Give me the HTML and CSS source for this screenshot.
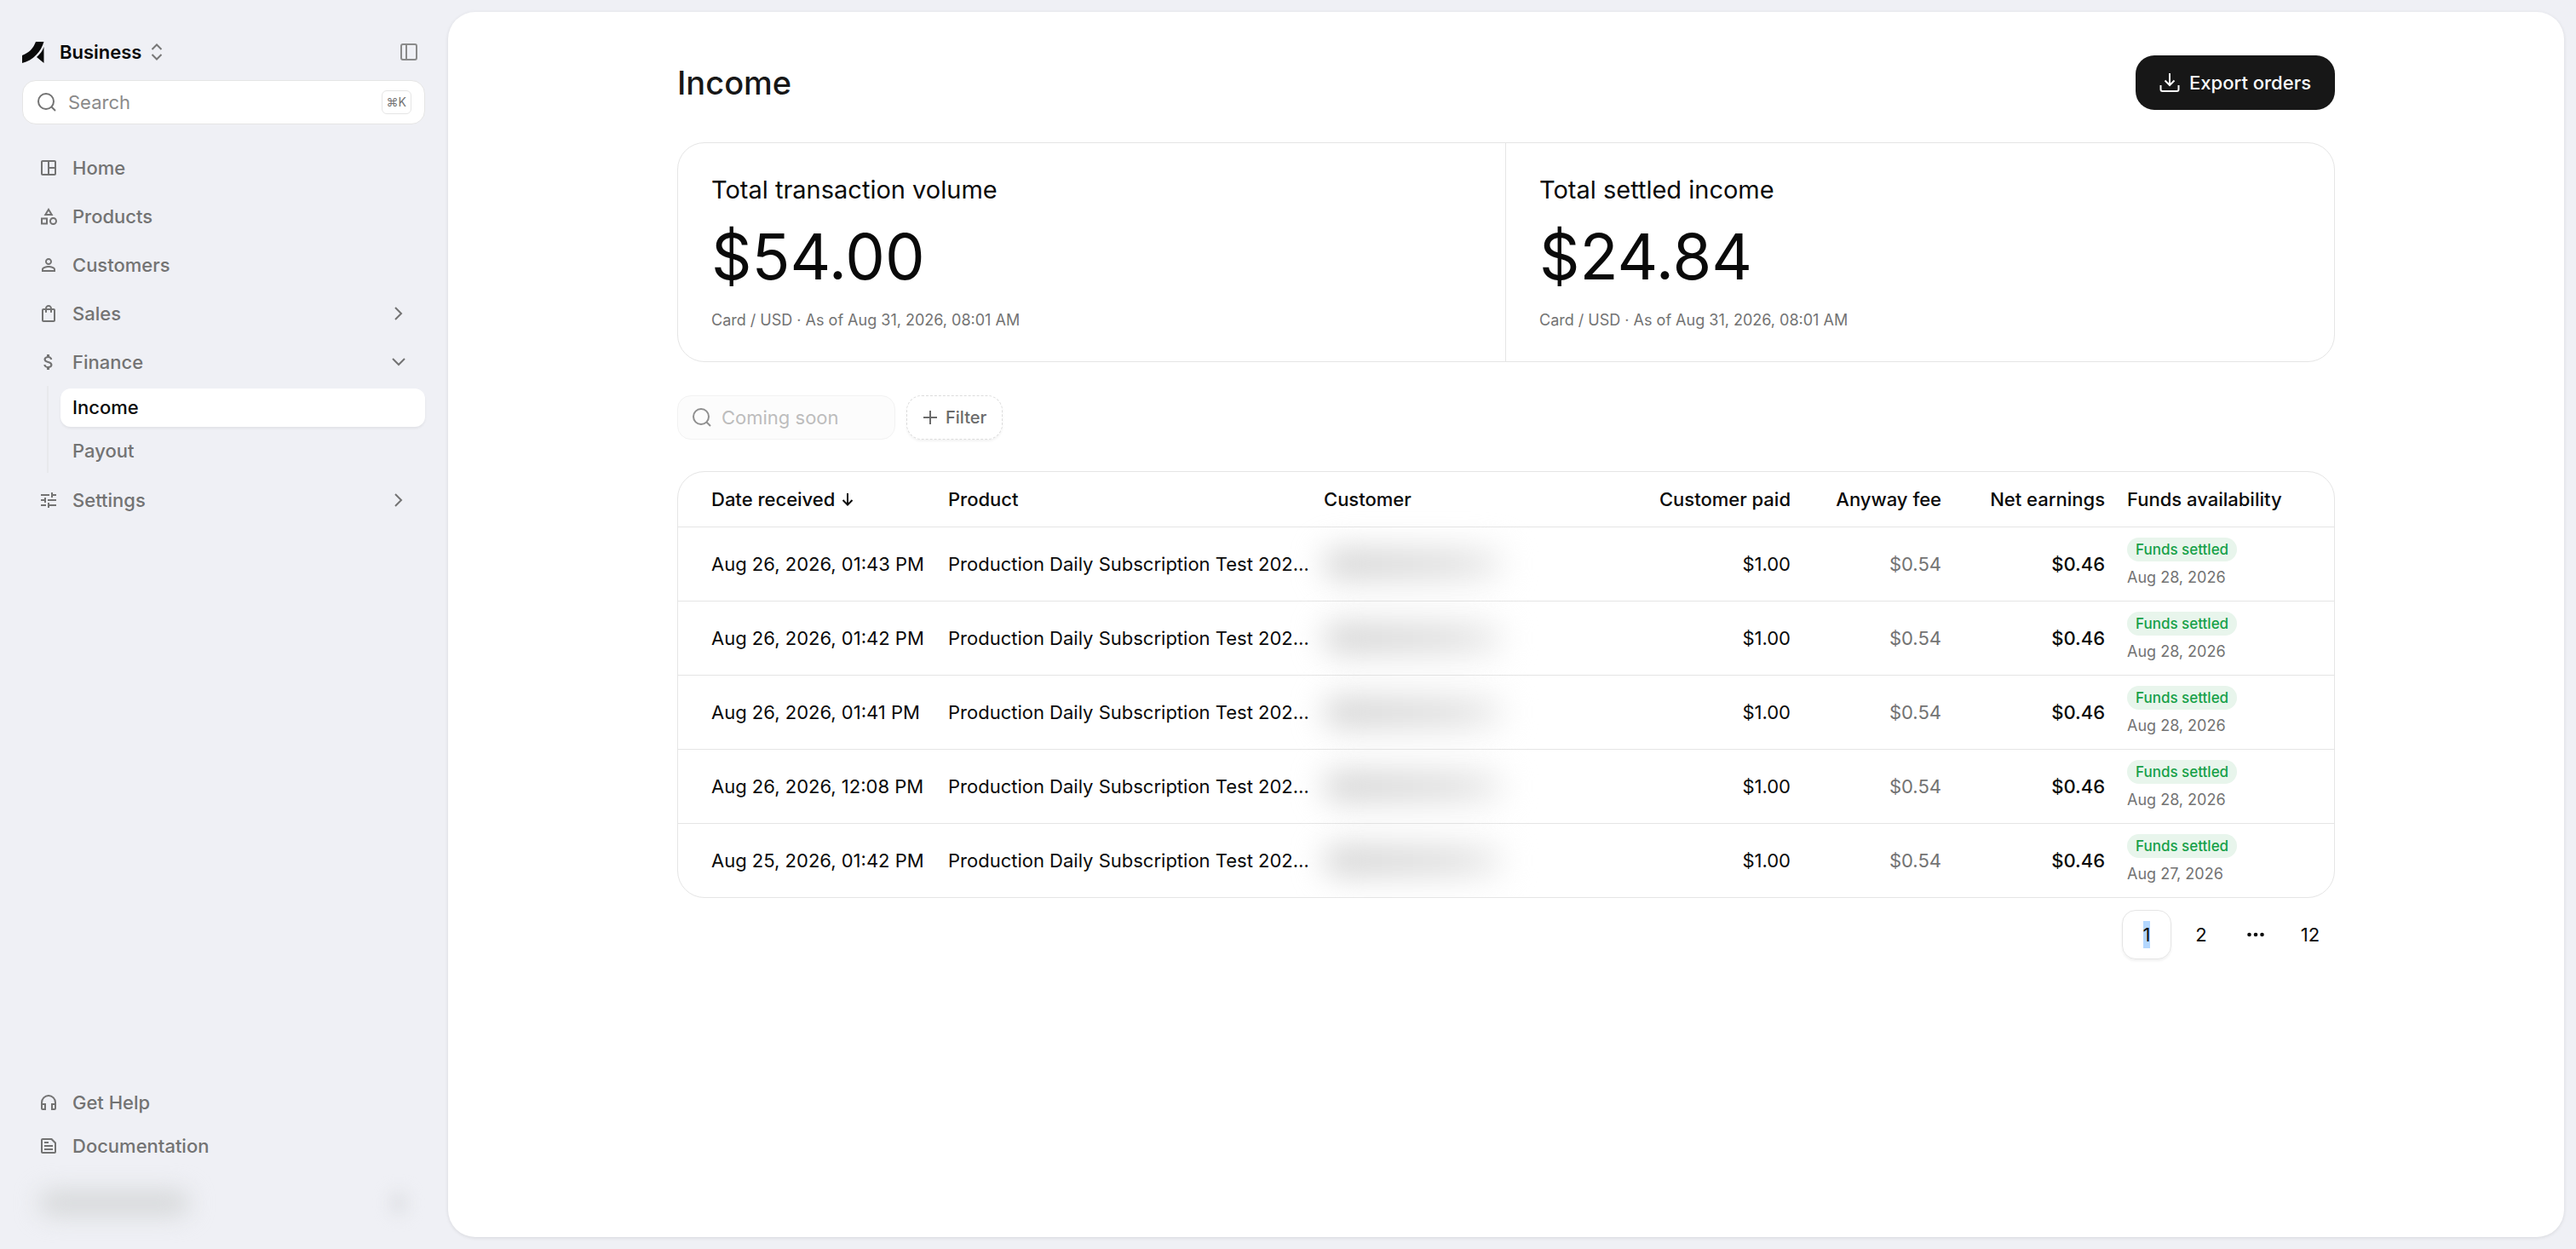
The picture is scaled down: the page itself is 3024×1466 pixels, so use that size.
FILE: index.html
```html
<!DOCTYPE html>
<html lang="en">
<head>
    <meta charset="UTF-8">
    <meta name="viewport" content="width=device-width, initial-scale=1.0">
    <title>Income</title>
    <link rel="stylesheet" href="styles.css">
</head>
<body>
    <aside class="sidebar">
        <div class="brand-row">
            <button class="brand" type="button">
                <svg class="logo" viewBox="0 0 26 26"><path d="M16 1h9.500C22.500 12 13 23 0 26v-9C8 14 13 9 16 1z"/><path d="M25.500 7v19l-8.500-7c4-3.500 7-7.500 8.500-12z"/></svg>
                <span>Business</span>
                <svg class="updown" viewBox="0 0 14 20"><path d="M1.500 7L7 1.500 12.500 7M1.500 13L7 18.500 12.500 13"/></svg>
            </button>
            <button class="toggle" type="button" aria-label="Toggle sidebar">
                <svg viewBox="0 0 20 20"><rect x="1" y="1" width="18" height="18" rx="2"/><path d="M7 1v18"/></svg>
            </button>
        </div>
        <label class="search">
            <svg viewBox="0 0 24 24"><circle cx="11" cy="11" r="9"/><path d="M17.500 17.500L22 22"/></svg>
            <input type="text" placeholder="Search" aria-label="Search">
            <kbd>⌘K</kbd>
        </label>

        <nav class="nav">
            <a href="#" class="nav-item">
                <svg class="icon" viewBox="0 0 24 24"><path d="M19 3H5c-1.100 0-2 .9-2 2v14c0 1.100.9 2 2 2h14c1.100 0 2-.9 2-2V5c0-1.100-.9-2-2-2zM5 19V5h6v14H5zm14 0h-6v-6h6v6zm0-8h-6V5h6v6z"/></svg>
                <span>Home</span>
            </a>
            <a href="#" class="nav-item">
                <svg class="icon" viewBox="0 0 24 24"><path d="M12 2l-5.500 9h11L12 2zm0 3.840L13.930 9h-3.870L12 5.840zM17.500 13c-2.490 0-4.500 2.010-4.500 4.500s2.010 4.500 4.500 4.500 4.500-2.010 4.500-4.500-2.010-4.500-4.500-4.500zm0 7a2.500 2.500 0 0 1 0-5 2.500 2.500 0 0 1 0 5zM3 21.500h8v-8H3v8zm2-6h4v4H5v-4z"/></svg>
                <span>Products</span>
            </a>
            <a href="#" class="nav-item">
                <svg class="icon" viewBox="0 0 24 24"><path d="M12 5.900a2.100 2.100 0 1 1 0 4.200 2.100 2.100 0 0 1 0-4.200m0 9c2.970 0 6.100 1.460 6.100 2.100v1.100H5.900V17c0-.64 3.130-2.100 6.100-2.100M12 4C9.790 4 8 5.790 8 8s1.790 4 4 4 4-1.790 4-4-1.790-4-4-4zm0 9c-2.670 0-8 1.340-8 4v3h16v-3c0-2.660-5.330-4-8-4z"/></svg>
                <span>Customers</span>
            </a>
            <a href="#" class="nav-item">
                <svg class="icon" viewBox="0 0 24 24"><path d="M18 6h-2c0-2.210-1.790-4-4-4S8 3.790 8 6H6c-1.100 0-2 .9-2 2v12c0 1.100.9 2 2 2h12c1.100 0 2-.9 2-2V8c0-1.100-.9-2-2-2zm-6-2c1.100 0 2 .9 2 2h-4c0-1.100.9-2 2-2zm6 16H6V8h2v2c0 .55.45 1 1 1s1-.45 1-1V8h4v2c0 .55.45 1 1 1s1-.45 1-1V8h2v12z"/></svg>
                <span>Sales</span>
                <svg class="chevron" viewBox="0 0 20 20"><path d="M6 3l7 7-7 7"/></svg>
            </a>
            <a href="#" class="nav-item">
                <svg class="icon" viewBox="0 0 24 24"><path d="M11.800 10.900c-2.270-.59-3-1.200-3-2.150 0-1.090 1.010-1.850 2.700-1.850 1.780 0 2.440.85 2.500 2.100h2.210c-.07-1.720-1.120-3.300-3.210-3.810V3h-3v2.160c-1.940.42-3.500 1.680-3.500 3.610 0 2.310 1.910 3.460 4.700 4.130 2.500.6 3 1.480 3 2.410 0 .69-.49 1.790-2.700 1.790-2.060 0-2.870-.92-2.980-2.100h-2.200c.12 2.190 1.760 3.420 3.680 3.830V21h3v-2.150c1.950-.37 3.500-1.500 3.500-3.550 0-2.840-2.430-3.810-4.700-4.400z"/></svg>
                <span>Finance</span>
                <svg class="chevron" viewBox="0 0 20 20"><path d="M3 6l7 7 7-7"/></svg>
            </a>
            <div class="subnav">
                <a href="#" class="sub-item active">Income</a>
                <a href="#" class="sub-item">Payout</a>
            </div>
            <a href="#" class="nav-item">
                <svg class="icon" viewBox="0 0 24 24"><path d="M3 17v2h6v-2H3zM3 5v2h10V5H3zm10 16v-2h8v-2h-8v-2h-2v6h2zM7 9v2H3v2h4v2h2V9H7zm14 4v-2H11v2h10zm-6-4h2V7h4V5h-4V3h-2v6z"/></svg>
                <span>Settings</span>
                <svg class="chevron" viewBox="0 0 20 20"><path d="M6 3l7 7-7 7"/></svg>
            </a>
        </nav>

        <nav class="nav-bottom">
            <a href="#" class="nav-item">
                <svg class="icon" viewBox="0 0 24 24"><path d="M12 3a9 9 0 0 0-9 9v7c0 1.100.9 2 2 2h4v-8H5v-1a7 7 0 0 1 14 0v1h-4v8h4a2 2 0 0 0 2-2v-7a9 9 0 0 0-9-9zM7 15v4H5v-4h2zm12 4h-2v-4h2v4z"/></svg>
                <span>Get Help</span>
            </a>
            <a href="#" class="nav-item">
                <svg class="icon" viewBox="0 0 24 24"><path d="M16 3H5c-1.100 0-2 .9-2 2v14c0 1.100.9 2 2 2h14c1.100 0 2-.9 2-2V8l-5-5zm3 16H5V5h10l4 4v10zM7 17h10v-2H7v2zm5-10H7v2h5V7zm-5 6h10v-2H7v2z"/></svg>
                <span>Documentation</span>
            </a>
        </nav>
        <div class="account">
            <span class="account-name"></span>
            <span class="account-more"></span>
        </div>
    </aside>

    <main class="panel">
        <div class="content">
            <header class="page-head">
                <h1>Income</h1>
                <button class="export" type="button">
                    <svg viewBox="0 0 24 24"><path d="M12 1v14M6.500 9.500L12 15l5.500-5.500M1.500 15v5a2 2 0 0 0 2 2h17a2 2 0 0 0 2-2v-5"/></svg>
                    Export orders
                </button>
            </header>

            <section class="stats">
                <div class="stat">
                    <h2>Total transaction volume</h2>
                    <p class="amount">$54.00</p>
                    <p class="note">Card / USD · As of Aug 31, 2026, 08:01 AM</p>
                </div>
                <div class="stat">
                    <h2>Total settled income</h2>
                    <p class="amount">$24.84</p>
                    <p class="note">Card / USD · As of Aug 31, 2026, 08:01 AM</p>
                </div>
            </section>

            <div class="filters">
                <label class="search table-search">
                    <svg viewBox="0 0 24 24"><circle cx="11" cy="11" r="9"/><path d="M17.500 17.500L22 22"/></svg>
                    <input type="text" placeholder="Coming soon" aria-label="Search orders" disabled>
                </label>
                <button class="filter" type="button">
                    <svg viewBox="0 0 18 18"><path d="M9 1v16M1 9h16"/></svg>
                    Filter
                </button>
            </div>

            <div class="table-card">
                <table>
                    <thead>
                        <tr>
                            <th class="col-date">Date received <svg class="sort" viewBox="0 0 14 16"><path d="M7 1v13M1.500 9L7 14.500 12.500 9"/></svg></th>
                            <th class="col-product">Product</th>
                            <th>Customer</th>
                            <th class="col-paid num">Customer paid</th>
                            <th class="col-fee num">Anyway fee</th>
                            <th class="col-net num">Net earnings</th>
                            <th class="col-funds">Funds availability</th>
                        </tr>
                    </thead>
                    <tbody>
                        <tr>
                            <td>Aug 26, 2026, 01:43 PM</td>
                            <td>Production Daily Subscription Test 202…</td>
                            <td><span class="hidden-name"></span></td>
                            <td class="num">$1.00</td>
                            <td class="num fee">$0.54</td>
                            <td class="num net">$0.46</td>
                            <td><span class="badge">Funds settled</span><span class="settled">Aug 28, 2026</span></td>
                        </tr>
                        <tr>
                            <td>Aug 26, 2026, 01:42 PM</td>
                            <td>Production Daily Subscription Test 202…</td>
                            <td><span class="hidden-name"></span></td>
                            <td class="num">$1.00</td>
                            <td class="num fee">$0.54</td>
                            <td class="num net">$0.46</td>
                            <td><span class="badge">Funds settled</span><span class="settled">Aug 28, 2026</span></td>
                        </tr>
                        <tr>
                            <td>Aug 26, 2026, 01:41 PM</td>
                            <td>Production Daily Subscription Test 202…</td>
                            <td><span class="hidden-name"></span></td>
                            <td class="num">$1.00</td>
                            <td class="num fee">$0.54</td>
                            <td class="num net">$0.46</td>
                            <td><span class="badge">Funds settled</span><span class="settled">Aug 28, 2026</span></td>
                        </tr>
                        <tr>
                            <td>Aug 26, 2026, 12:08 PM</td>
                            <td>Production Daily Subscription Test 202…</td>
                            <td><span class="hidden-name"></span></td>
                            <td class="num">$1.00</td>
                            <td class="num fee">$0.54</td>
                            <td class="num net">$0.46</td>
                            <td><span class="badge">Funds settled</span><span class="settled">Aug 28, 2026</span></td>
                        </tr>
                        <tr>
                            <td>Aug 25, 2026, 01:42 PM</td>
                            <td>Production Daily Subscription Test 202…</td>
                            <td><span class="hidden-name"></span></td>
                            <td class="num">$1.00</td>
                            <td class="num fee">$0.54</td>
                            <td class="num net">$0.46</td>
                            <td><span class="badge">Funds settled</span><span class="settled">Aug 27, 2026</span></td>
                        </tr>
                    </tbody>
                </table>
            </div>

            <nav class="pagination">
                <a href="#" class="page current"><span class="selected">1</span></a>
                <a href="#" class="page">2</a>
                <span class="page"><svg viewBox="0 0 20 6"><circle cx="2.500" cy="3" r="2.300"/><circle cx="10" cy="3" r="2.300"/><circle cx="17.500" cy="3" r="2.300"/></svg></span>
                <a href="#" class="page">12</a>
            </nav>
        </div>
    </main>
</body>
</html>
```
FILE: styles.css
```css
* {
    box-sizing: border-box;
}

body {
    margin: 0;
    min-height: 100vh;
    display: flex;
    background-color: #eff0f5;
    color: #0a0a0a;
    font-family: Inter, sans-serif;
    font-size: 22px;
    line-height: 32px;
}

a {
    color: inherit;
    text-decoration: none;
}

button,
input {
    font: inherit;
    color: inherit;
}

button {
    border: none;
    background: none;
    padding: 0;
    cursor: pointer;
}

svg {
    flex: none;
    fill: none;
    stroke: currentColor;
    stroke-width: 2;
}

/* sidebar */
.sidebar {
    flex: none;
    width: 526px;
    padding: 40px 27px 16px 26px;
    display: flex;
    flex-direction: column;
}

.brand-row {
    display: flex;
    align-items: center;
    justify-content: space-between;
    height: 42px;
    margin-bottom: 12px;
    padding-right: 9px;
}

.brand {
    display: flex;
    align-items: center;
    font-weight: 600;
}

.logo {
    width: 26px;
    height: 26px;
    margin-right: 18px;
    fill: currentColor;
    stroke: none;
}

.updown {
    width: 14px;
    height: 20px;
    margin-left: 11px;
    color: #777;
}

.toggle {
    display: flex;
    color: #8a8a8a;
}

.toggle svg {
    width: 20px;
    height: 20px;
}

.search {
    display: flex;
    align-items: center;
    gap: 13px;
    height: 52px;
    padding: 0 15px 0 16px;
    border: 1px solid #e5e5e5;
    border-radius: 16px;
    background-color: #fff;
    color: #737373;
}

.search svg {
    width: 24px;
    height: 24px;
}

.search input {
    flex: 1;
    min-width: 0;
    padding: 0;
    border: none;
    outline: none;
    background: none;
}

.search input::placeholder {
    color: #8a8a8a;
    opacity: 1;
}

kbd {
    height: 28px;
    padding: 0 5px;
    border: 1px solid #e5e5e5;
    border-radius: 6px;
    font-family: inherit;
    font-size: 14px;
    line-height: 26px;
}

.nav {
    margin-top: 25px;
    display: flex;
    flex-direction: column;
    gap: 6px;
}

.nav-item {
    display: flex;
    align-items: center;
    gap: 16px;
    height: 51px;
    padding: 0 21px 0 19px;
    color: #737373;
    font-weight: 500;
}

.icon {
    width: 24px;
    height: 24px;
    fill: currentColor;
    stroke: none;
}

.chevron {
    width: 20px;
    height: 20px;
    margin-left: auto;
}

.subnav {
    display: flex;
    flex-direction: column;
    gap: 6px;
    margin: -3px 0 0 29px;
    padding: 3px 0 3px 14px;
    border-left: 2px solid #e8e9ec;
}

.sub-item {
    padding: 6px 14px 7px;
    border-radius: 12px;
    color: #737373;
    font-weight: 500;
}

.sub-item.active {
    background-color: #fff;
    color: #0a0a0a;
    box-shadow: 0 2px 3px rgba(0, 0, 0, 0.06);
}

.nav-bottom {
    margin-top: auto;
}

.account {
    display: flex;
    align-items: center;
    justify-content: space-between;
    height: 80px;
    padding: 4px 24px 0 20px;
}

.account-name {
    width: 176px;
    height: 28px;
    border-radius: 14px;
    background-color: #d5d7d8;
    filter: blur(14px);
}

.account-more {
    width: 14px;
    height: 24px;
    border-radius: 7px;
    background-color: #d8d9dd;
    filter: blur(10px);
}

/* main panel */
.panel {
    flex: 1;
    min-width: 0;
    margin: 14px 14px 14px 0;
    padding: 51px 40px;
    border-radius: 32px;
    background-color: #fff;
    box-shadow: 0 1px 4px rgba(0, 0, 0, 0.1);
}

.content {
    max-width: 1946px;
    margin: 0 auto;
}

.page-head {
    display: flex;
    align-items: center;
    justify-content: space-between;
    margin-bottom: 38px;
}

h1 {
    margin: 0;
    color: #171717;
    font-size: 38px;
    font-weight: 500;
    line-height: 48px;
}

.export {
    display: flex;
    align-items: center;
    gap: 11px;
    height: 64px;
    padding: 0 28px;
    border-radius: 22px;
    background-color: #171717;
    color: #fafafa;
    font-weight: 500;
}

.export svg {
    width: 24px;
    height: 24px;
}

.stats {
    display: grid;
    grid-template-columns: 1fr 1fr;
    border: 1px solid #e5e5e5;
    border-radius: 32px;
}

.stat {
    padding: 37px 39px 32px;
}

.stat:first-child {
    border-right: 1px solid #e5e5e5;
}

.stat h2 {
    margin: 0;
    font-size: 29px;
    font-weight: 400;
    line-height: 36px;
}

.amount {
    margin: 18px 0 17px;
    font-size: 74px;
    line-height: 84px;
}

.note {
    margin: 0;
    color: #737373;
    font-size: 18px;
}

.filters {
    display: flex;
    gap: 13px;
    margin: 39px 0 37px;
}

.table-search {
    width: 256px;
    border-color: #f2f2f2;
    background-color: #fcfcfc;
    gap: 11px;
    color: #8f8f8f;
}

.table-search input::placeholder {
    color: #bdbdbd;
}

.filter {
    display: flex;
    align-items: center;
    gap: 9px;
    padding: 0 18px;
    border: 1px dashed #dcdcdc;
    border-radius: 18px;
    box-shadow: 0 2px 3px rgba(0, 0, 0, 0.05);
    color: #6b6b6b;
    font-size: 20px;
    font-weight: 500;
}

.filter svg {
    width: 18px;
    height: 18px;
}

/* orders table */
.table-card {
    border: 1px solid #e5e5e5;
    border-radius: 32px;
    overflow: hidden;
}

table {
    width: 100%;
    table-layout: fixed;
    border-spacing: 0;
}

th,
td {
    padding: 0 13px;
    text-align: left;
    white-space: nowrap;
}

th {
    height: 64px;
    font-weight: 500;
}

td {
    height: 87px;
    border-top: 1px solid #e5e5e5;
}

th:first-child,
td:first-child {
    padding-left: 39px;
}

.col-date {
    width: 304px;
}

.col-product {
    width: 441px;
}

.col-paid {
    width: 195px;
}

.col-fee {
    width: 177px;
}

.col-net {
    width: 192px;
}

.col-funds {
    width: 256px;
}

.sort {
    width: 14px;
    height: 16px;
    margin-left: 2px;
}

.num {
    text-align: right;
}

.fee {
    color: #737373;
}

.net {
    font-weight: 500;
}

.hidden-name {
    display: block;
    width: 212px;
    height: 36px;
    border-radius: 18px;
    background: linear-gradient(to right, #d2d2d2, #dedede 70%, #f0f0f0);
    filter: blur(18px);
}

.badge {
    display: block;
    width: fit-content;
    padding: 0 10px;
    border-radius: 14px;
    background-color: #e8f5ec;
    color: #16a048;
    font-size: 17px;
    font-weight: 500;
    line-height: 28px;
}

.settled {
    display: block;
    padding-top: 4px;
    color: #737373;
    font-size: 18px;
    line-height: 30px;
}

/* pagination */
.pagination {
    display: flex;
    justify-content: flex-end;
    gap: 6px;
    margin-top: 14px;
}

.page {
    display: flex;
    align-items: center;
    justify-content: center;
    width: 58px;
    height: 58px;
    border-radius: 16px;
}

.page.current {
    border: 1px solid #e5e5e5;
    box-shadow: 0 2px 3px rgba(0, 0, 0, 0.06);
}

.page svg {
    width: 20px;
    height: 6px;
    fill: currentColor;
    stroke: none;
}

.selected {
    background-color: #b3d7ff;
}
```
